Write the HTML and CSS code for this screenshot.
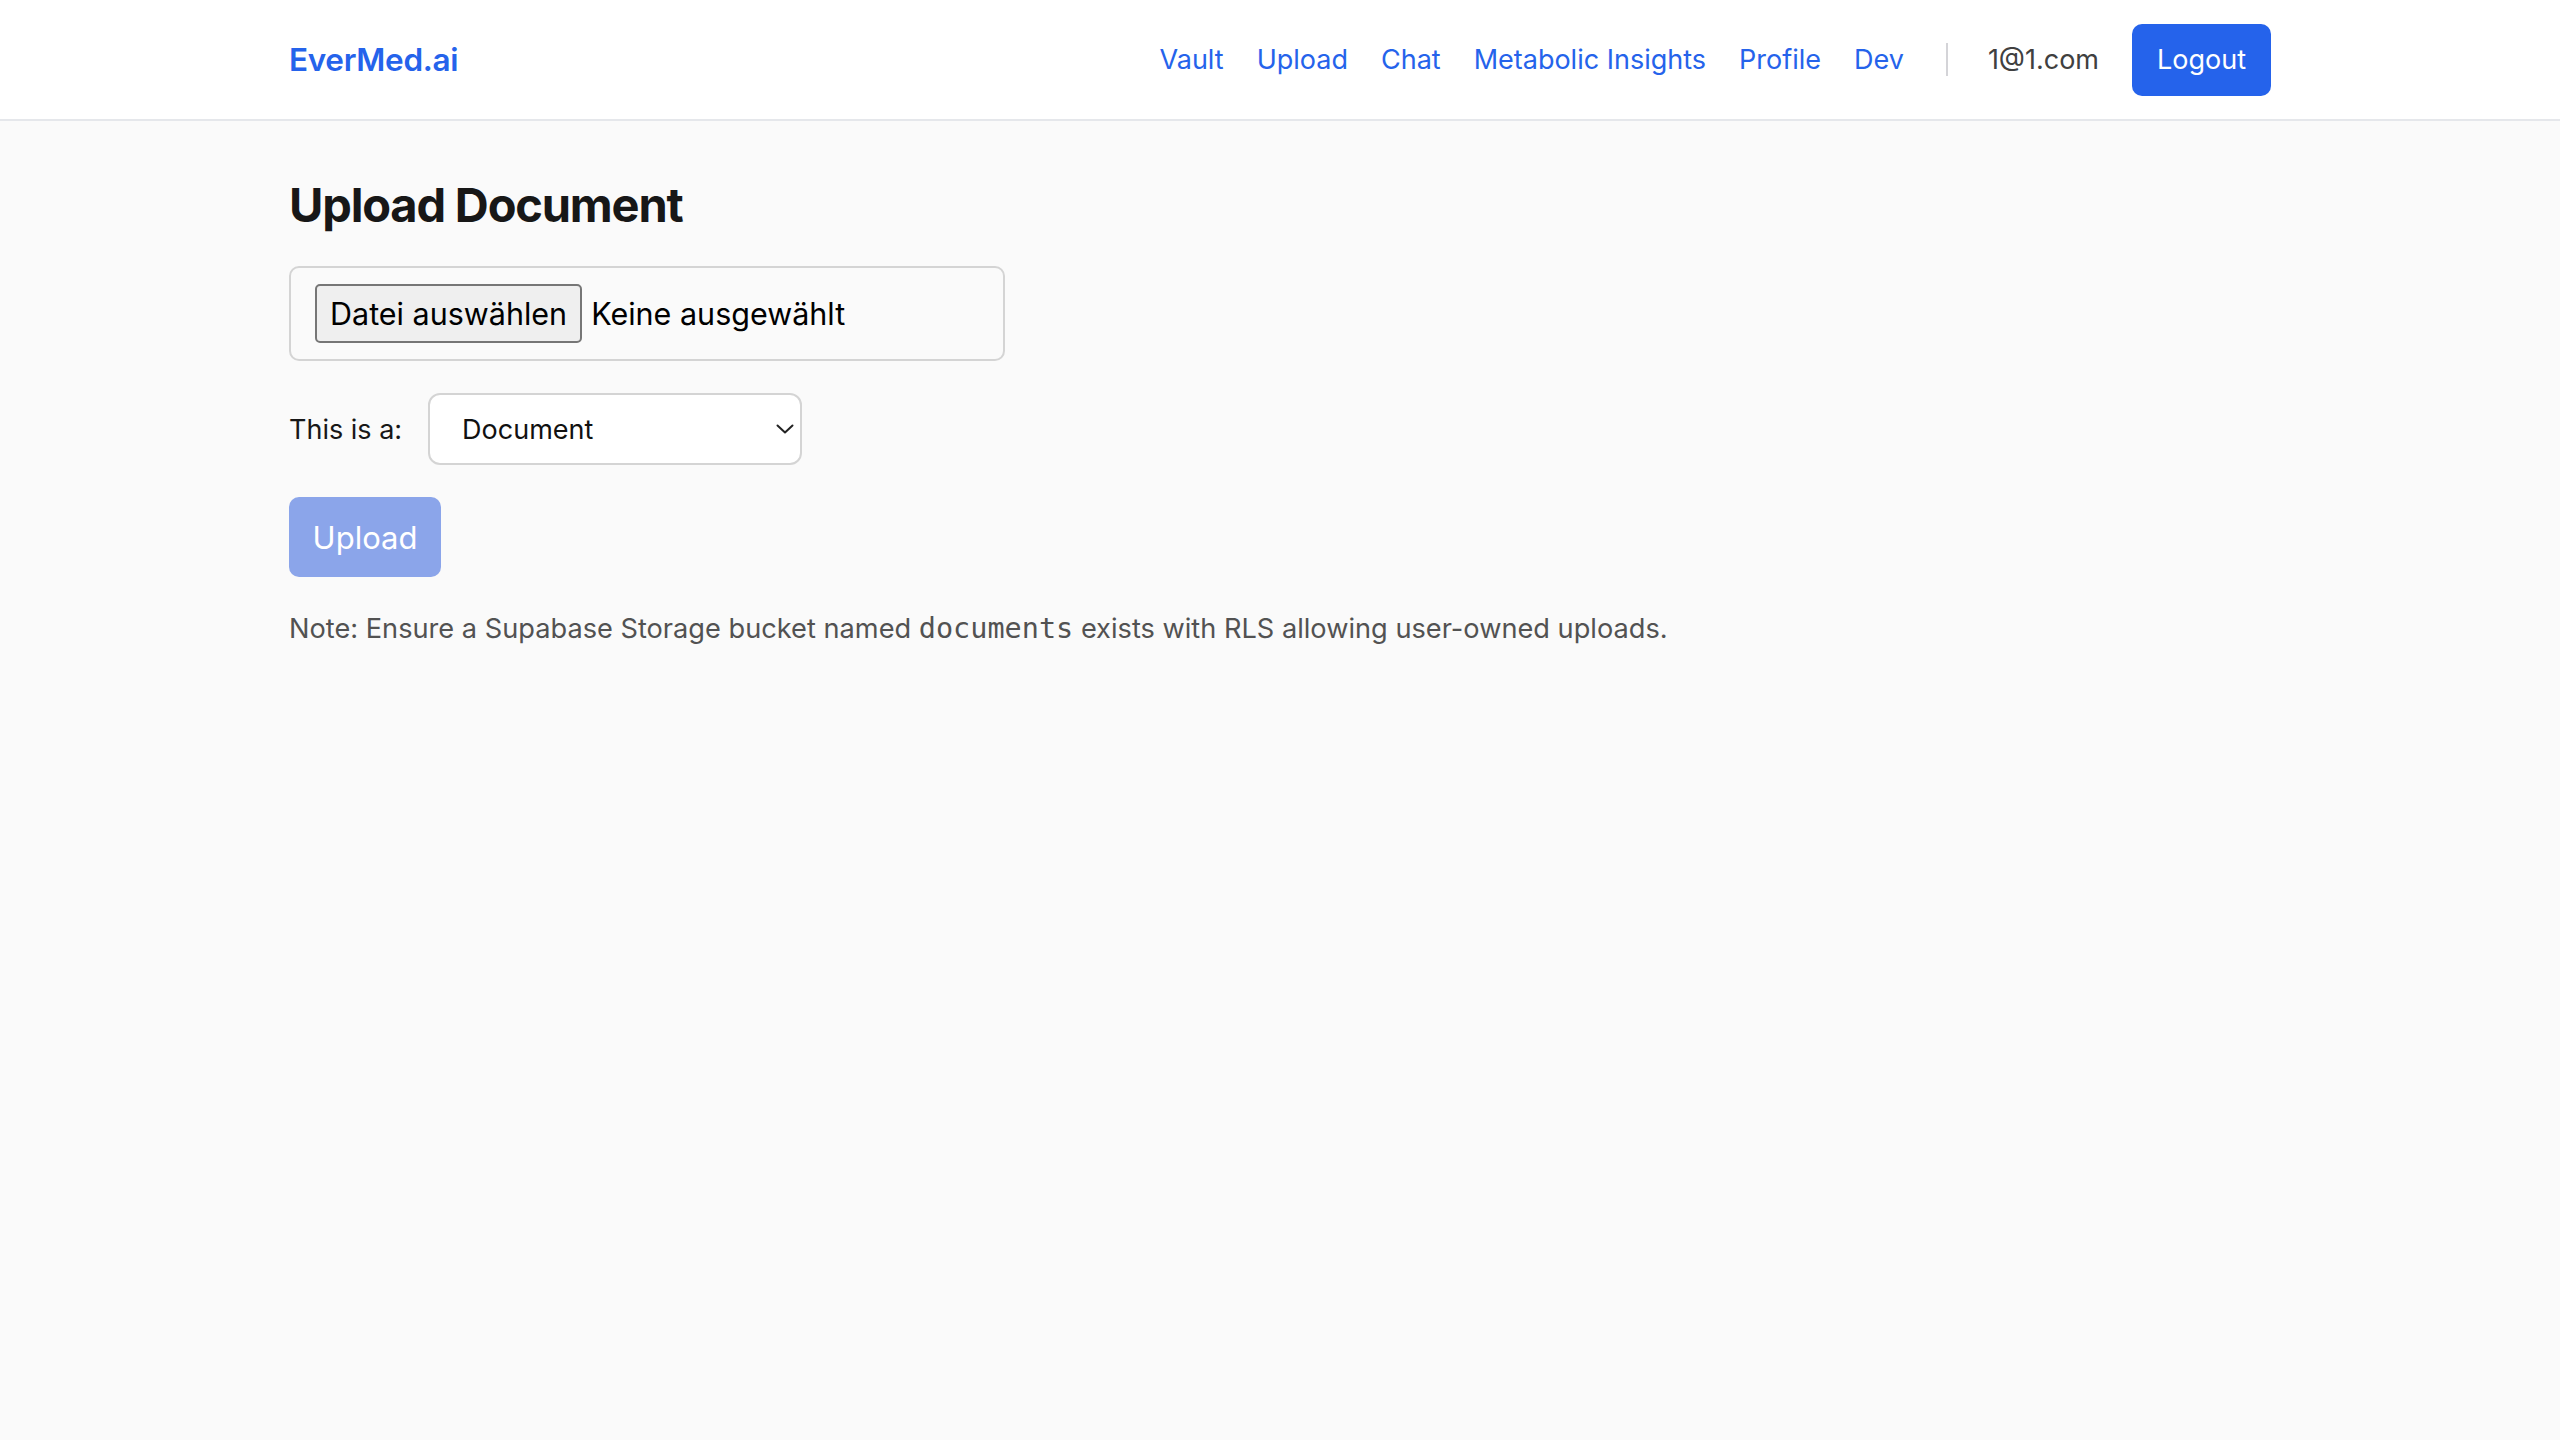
FILE: index.html
```html
<!DOCTYPE html>
<html lang="de">
<head>
<meta charset="utf-8">
<title>EverMed.ai – Upload Document</title>
<link rel="stylesheet" href="styles.css">
</head>
<body>
<header class="topbar">
  <div class="container bar">
    <a class="brand" href="#">EverMed.ai</a>
    <nav class="nav">
      <div class="links">
        <a href="#">Vault</a>
        <a href="#">Upload</a>
        <a href="#">Chat</a>
        <a href="#">Metabolic Insights</a>
        <a href="#">Profile</a>
        <a href="#">Dev</a>
      </div>
      <span class="divider"></span>
      <span class="email">1@1.com</span>
      <button class="logout" type="button">Logout</button>
    </nav>
  </div>
</header>
<main class="container main">
  <h1 class="title">Upload Document</h1>
  <div class="file-box">
    <span class="file-btn">Datei auswählen</span>
    <span class="file-name">Keine ausgewählt</span>
  </div>
  <div class="type-row">
    <label class="type-label" for="kind">This is a:</label>
    <div class="select-wrap">
      <select id="kind" class="select">
        <option>Document</option>
        <option>Lab result</option>
        <option>Prescription</option>
      </select>
      <svg class="chev" width="18" height="10" viewBox="0 0 18 10" aria-hidden="true"><path d="M1.5 1.5 L9 8.5 L16.5 1.5" fill="none" stroke="#222" stroke-width="2" stroke-linecap="round" stroke-linejoin="round"/></svg>
    </div>
  </div>
  <button class="upload" type="button" disabled>Upload</button>
  <p class="note">Note: Ensure a Supabase Storage bucket named <code>documents</code> exists with RLS allowing user-owned uploads.</p>
</main>
</body>
</html>
```
FILE: styles.css
```css
* { box-sizing: border-box; }

html, body {
  margin: 0;
  padding: 0;
}

body {
  background: #fafafa;
  font-family: Inter, "Noto Sans", "Liberation Sans", sans-serif;
  font-size: 27px;
  color: #171717;
  min-height: 1440px;
}

.container {
  width: 1982px;
  margin: 0 auto;
}

.topbar {
  background: #ffffff;
  border-bottom: 2px solid #e5e7eb;
}

.bar {
  height: 119px;
  display: flex;
  align-items: center;
  justify-content: space-between;
}

.brand {
  font-size: 31.5px;
  font-weight: 600;
  color: #2563eb;
  text-decoration: none;
  letter-spacing: -0.01em;
}

.nav {
  display: flex;
  align-items: center;
}

.links {
  display: flex;
  align-items: center;
  gap: 33px;
}

.links a {
  color: #2563eb;
  text-decoration: none;
  font-size: 27px;
}

.divider {
  width: 2px;
  height: 33px;
  background: #d4d4d8;
  margin-left: 42px;
}

.email {
  margin-left: 40px;
  color: #404040;
  font-size: 27px;
}

.logout {
  margin-left: 33px;
  height: 72px;
  padding: 0 25px;
  border: none;
  border-radius: 10px;
  background: #2563eb;
  color: #ffffff;
  font-family: inherit;
  font-size: 27px;
}

.main {
  padding-top: 54px;
  display: flex;
  flex-direction: column;
  align-items: flex-start;
  gap: 32px;
}

.title {
  margin: 0;
  font-size: 47px;
  line-height: 59px;
  font-weight: 700;
  letter-spacing: -0.025em;
  color: #171717;
}

.file-box {
  width: 716px;
  height: 95px;
  border: 2px solid #d4d4d4;
  border-radius: 10px;
  padding: 0 24px;
  display: flex;
  align-items: center;
}

.file-btn {
  height: 59px;
  display: flex;
  align-items: center;
  padding: 0 13px;
  border: 2px solid #767676;
  border-radius: 5px;
  background: #efefef;
  color: #000000;
  font-size: 30.5px;
  margin-right: 9px;
}

.file-name {
  font-size: 30.5px;
  color: #000000;
}

.type-row {
  display: flex;
  align-items: center;
  gap: 26px;
}

.type-label {
  font-size: 27px;
  color: #171717;
}

.select-wrap {
  position: relative;
}

.select {
  appearance: none;
  -webkit-appearance: none;
  width: 374px;
  height: 72px;
  border: 2px solid #d4d4d4;
  border-radius: 12px;
  background: #ffffff;
  padding: 0 40px 0 32px;
  font-family: inherit;
  font-size: 27px;
  color: #111111;
}

.chev {
  position: absolute;
  right: 8px;
  top: 31px;
  pointer-events: none;
}

.upload {
  height: 80px;
  width: 152px;
  padding: 0;
  border: none;
  border-radius: 10px;
  background: #8ba5ea;
  color: #ffffff;
  font-family: inherit;
  font-size: 31px;
}

.note {
  margin: 0;
  font-size: 27.2px;
  line-height: 40px;
  color: #525252;
}

.note code {
  font-family: "DejaVu Sans Mono", "Liberation Mono", monospace;
  font-size: 28.5px;
}
```
